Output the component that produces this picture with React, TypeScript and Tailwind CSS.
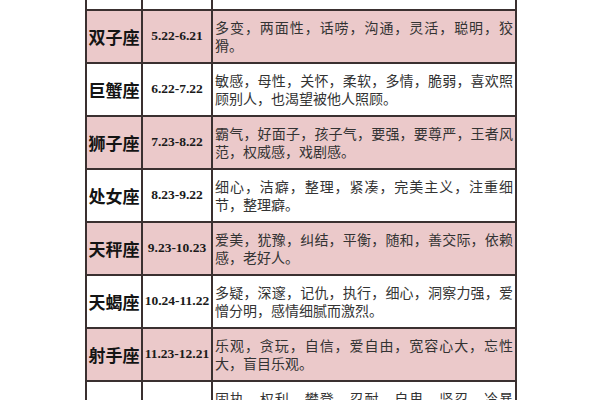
import React from 'react';

type Row = { name: string; date: string; lines: [string, string]; pink: boolean };

const rows: Row[] = [
  { name: '双子座', date: '5.22-6.21', lines: ['多变，两面性，话唠，沟通，灵活，聪明，狡', '猾。'], pink: true },
  { name: '巨蟹座', date: '6.22-7.22', lines: ['敏感，母性，关怀，柔软，多情，脆弱，喜欢照', '顾别人，也渴望被他人照顾。'], pink: false },
  { name: '狮子座', date: '7.23-8.22', lines: ['霸气，好面子，孩子气，要强，要尊严，王者风', '范，权威感，戏剧感。'], pink: true },
  { name: '处女座', date: '8.23-9.22', lines: ['细心，洁癖，整理，紧凑，完美主义，注重细', '节，整理癖。'], pink: false },
  { name: '天秤座', date: '9.23-10.23', lines: ['爱美，犹豫，纠结，平衡，随和，善交际，依赖', '感，老好人。'], pink: true },
  { name: '天蝎座', date: '10.24-11.22', lines: ['多疑，深邃，记仇，执行，细心，洞察力强，爱', '憎分明，感情细腻而激烈。'], pink: false },
  { name: '射手座', date: '11.23-12.21', lines: ['乐观，贪玩，自信，爱自由，宽容心大，忘性', '大，盲目乐观。'], pink: true },
  { name: '摩羯座', date: '12.22-1.19', lines: ['固执，权利，攀登，忍耐，自卑，坚忍，冷暴', '力，踏实，务实。'], pink: false },
];

const cjk = { fontFamily: '"Noto Sans CJK SC", "Noto Sans", sans-serif' };
const serif = { fontFamily: '"Liberation Serif", "Times New Roman", serif' };

function ZodiacRow({ row }: { row: Row }) {
  const bg = row.pink ? 'bg-[#ebc9ca]' : 'bg-white';
  return (
    <div className={`grid grid-cols-[56px_70px_1fr] h-[53px] shrink-0 border-b-2 border-[#3a3030] ${bg}`}>
      <div className="flex items-center justify-center border-r-2 border-[#3a3030]">
        <span className="text-[17px] font-bold text-[#141414] leading-none" style={cjk}>
          {row.name}
        </span>
      </div>
      <div className="flex items-center justify-center border-r-2 border-[#3a3030]">
        <span className="text-[13.5px] font-bold text-[#1a1a1a] whitespace-nowrap" style={serif}>
          {row.date}
        </span>
      </div>
      <div className="flex flex-col justify-center pl-[2px] pr-[2px] text-[14px] leading-[17.5px] text-[#333]" style={cjk}>
        <div className="whitespace-nowrap text-justify [text-align-last:justify]">{row.lines[0]}</div>
        <div className="whitespace-nowrap">{row.lines[1]}</div>
      </div>
    </div>
  );
}

export default function App() {
  return (
    <div className="w-[600px] h-[400px] overflow-hidden bg-white">
      <div className="ml-[85px] w-[432px] flex flex-col border-l-2 border-r-2 border-[#3a3030]">
        {/* tail of the row above */}
        <div className="grid grid-cols-[56px_70px_1fr] h-[11px] shrink-0 border-b-2 border-[#3a3030] bg-white">
          <div className="border-r-2 border-[#3a3030]" />
          <div className="border-r-2 border-[#3a3030]" />
          <div />
        </div>
        {rows.map((row) => (
          <ZodiacRow key={row.name} row={row} />
        ))}
      </div>
    </div>
  );
}
